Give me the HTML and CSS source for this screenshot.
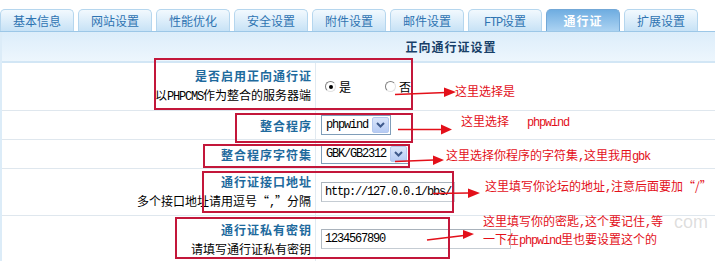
FILE: index.html
```html
<!DOCTYPE html>
<html lang="zh-CN">
<head>
<meta charset="utf-8">
<title>正向通行证设置</title>
<link rel="stylesheet" href="styles.css">
</head>
<body>
<div class="page">
  <ul class="tabs">
    <li class="tab">基本信息</li>
    <li class="tab">网站设置</li>
    <li class="tab">性能优化</li>
    <li class="tab">安全设置</li>
    <li class="tab">附件设置</li>
    <li class="tab">邮件设置</li>
    <li class="tab"><span class="mono">FTP</span>设置</li>
    <li class="tab active">通行证</li>
    <li class="tab">扩展设置</li>
  </ul>
  <div class="form">
    <div class="form-head">正向通行证设置</div>
    <div class="row row-tall">
      <div class="label"><b>是否启用正向通行证</b><span>以<span class="mono">PHPCMS</span>作为整合的服务器端</span></div>
      <div class="value">
        <span class="opt"><span class="radio checked"></span>是</span>
        <span class="opt opt-2"><span class="radio"></span>否</span>
      </div>
    </div>
    <div class="row row-short">
      <div class="label"><b>整合程序</b></div>
      <div class="value">
        <span class="select select-1"><span class="mono">phpwind</span><span class="drop"><svg width="9" height="6" viewBox="0 0 9 6"><path d="M1 1 L4.5 4.5 L8 1" fill="none" stroke="#3f5a8c" stroke-width="2"/></svg></span></span>
      </div>
    </div>
    <div class="row row-short">
      <div class="label"><b>整合程序字符集</b></div>
      <div class="value">
        <span class="select select-2"><span class="mono">GBK/GB2312</span><span class="drop"><svg width="9" height="6" viewBox="0 0 9 6"><path d="M1 1 L4.5 4.5 L8 1" fill="none" stroke="#3f5a8c" stroke-width="2"/></svg></span></span>
      </div>
    </div>
    <div class="row row-mid">
      <div class="label"><b>通行证接口地址</b><span>多个接口地址请用逗号“<span class="mono">,</span>”分隔</span></div>
      <div class="value"><span class="text text-url mono">http://127.0.0.1/bbs/</span></div>
    </div>
    <div class="row row-mid last">
      <div class="label"><b>通行证私有密钥</b><span>请填写通行证私有密钥</span></div>
      <div class="value"><span class="text text-key mono">1234567890</span></div>
    </div>
  </div>

  <div class="notes">
    <div class="box box-1"></div>
    <div class="box box-2"></div>
    <div class="box box-3"></div>
    <div class="box box-4"></div>
    <div class="box box-5"></div>
    <svg class="arrows" width="715" height="261" viewBox="0 0 715 261">
      <g stroke="#e3101a" stroke-width="1.6" fill="none">
        <path d="M395 94.5 L446 92.5"/>
        <path d="M398 129.5 L442 129.5"/>
        <path d="M395 161.5 L434 160"/>
        <path d="M433 193.5 L469 193"/>
        <path d="M427 240 L464 235.5"/>
      </g>
      <g fill="#e3101a">
        <polygon points="444,87.5 456,92 444,97"/>
        <polygon points="441,124.5 452,129.5 441,134.5"/>
        <polygon points="433,155.5 444,160 433,165"/>
        <polygon points="468,188.5 480,193 468,198"/>
        <polygon points="463,230 474,234 463,239"/>
      </g>
    </svg>
    <span class="note note-1">这里选择是</span>
    <span class="note note-2">这里选择<span class="mono gap">phpwind</span></span>
    <span class="note note-3">这里选择你程序的字符集<span class="mono">,</span>这里我用<span class="mono">gbk</span></span>
    <span class="note note-4">这里填写你论坛的地址<span class="mono">,</span>注意后面要加“/”</span>
    <span class="watermark">com</span>
    <span class="note note-5">这里填写你的密匙<span class="mono">,</span>这个要记住<span class="mono">,</span>等<br>一下在<span class="mono">phpwind</span>里也要设置这个的</span>
  </div>
</div>
</body>
</html>
```

FILE: styles.css
```css
html, body {
  margin: 0;
  padding: 0;
  overflow: hidden;
  background: #ffffff;
}

body {
  font-family: "Noto Sans CJK SC", "Noto Sans", sans-serif;
  font-size: 12px;
  color: #000000;
}

.page {
  position: relative;
  width: 900px;
  height: 261px;
}

.mono {
  font-family: "Liberation Mono", "DejaVu Sans Mono", monospace;
  font-size: 12px;
  letter-spacing: -1.2px;
}

/* tabs */
.tabs {
  display: flex;
  gap: 4px;
  margin: 0;
  padding: 9px 0 0;
  list-style: none;
  border-bottom: 1px solid #9cc7e7;
}

.tab {
  width: 74px;
  height: 22px;
  box-sizing: border-box;
  border: 1px solid #b5d6ee;
  border-bottom: none;
  border-radius: 5px 5px 0 0;
  background: linear-gradient(#f2f9fe, #c7e2f6);
  color: #2f74b2;
  text-align: center;
  line-height: 21px;
}

.tab.active {
  background: linear-gradient(#6fade1, #acd3f2);
  border-color: #73a8d7;
  color: #ffffff;
  font-weight: bold;
  letter-spacing: 1px;
}

/* form */
.form {
  border-left: 2px solid #dcecf8;
}

.form-head {
  height: 29px;
  line-height: 29px;
  text-align: center;
  font-weight: bold;
  letter-spacing: 1px;
  color: #173f68;
  background: linear-gradient(#dcedfa, #edf6fd);
  border-bottom: 2px solid #d2e6f5;
}

.row {
  display: grid;
  grid-template-columns: 314px 1fr;
  border-bottom: 1px solid #dfe7ee;
}

.row.last {
  border-bottom: none;
}

.row-tall { height: 47px; }
.row-short { height: 28px; }
.row-mid { height: 46px; }

.label {
  display: flex;
  flex-direction: column;
  justify-content: center;
  align-items: flex-end;
  padding-right: 4px;
  border-right: 1px solid #e2eaf1;
  line-height: 19px;
  text-align: right;
  white-space: nowrap;
}

.label b {
  color: #1e6a9d;
  letter-spacing: 1px;
  margin-right: -1px;
}

.value {
  display: flex;
  align-items: center;
  padding-left: 5px;
}

/* radios */
.opt {
  display: inline-flex;
  align-items: center;
}

.opt-2 {
  margin-left: 30px;
}

.radio {
  position: relative;
  display: inline-block;
  width: 11px;
  height: 11px;
  box-sizing: border-box;
  margin: 0 3px 0 4px;
  border-radius: 50%;
  border: 1px solid;
  border-color: #808080 #e2e2e2 #e2e2e2 #808080;
  background: #ffffff;
}

.radio.checked::after {
  content: "";
  position: absolute;
  left: 2.5px;
  top: 2.5px;
  width: 4px;
  height: 4px;
  border-radius: 50%;
  background: #000000;
}

/* selects */
.select {
  display: inline-flex;
  align-items: center;
  justify-content: space-between;
  height: 20px;
  box-sizing: border-box;
  border: 1px solid #7f9db9;
  padding: 0 1px 0 4px;
  background: #ffffff;
}

.select-1 { width: 70px; }
.select-2 { width: 88px; }

.drop {
  display: inline-flex;
  align-items: center;
  justify-content: center;
  width: 17px;
  height: 16px;
  box-sizing: border-box;
  border: 1px solid #b4c8ee;
  border-radius: 2px;
  background: linear-gradient(#dbe6fb, #b6cbf4);
}

/* text inputs */
.text {
  display: inline-flex;
  align-items: center;
  height: 20px;
  box-sizing: border-box;
  padding: 0 2px 0 3px;
  border: 1px solid #c5ccd3;
  border-top-color: #a9b2bb;
  border-left-color: #b3bbc3;
  background: #ffffff;
  white-space: nowrap;
  overflow: hidden;
}

.text-url { width: 134px; }
.text-key { width: 190px; }

/* annotation overlay */
.notes {
  position: absolute;
  left: 0;
  top: 0;
  width: 715px;
  height: 261px;
  pointer-events: none;
}

.box {
  position: absolute;
  box-sizing: border-box;
  border: 2px solid #c3173a;
}

.box-1 { left: 154px; top: 58px; width: 259px; height: 52px; }
.box-2 { left: 235px; top: 113px; width: 178px; height: 30px; }
.box-3 { left: 203px; top: 144px; width: 207px; height: 24px; }
.box-4 { left: 202px; top: 171px; width: 252px; height: 42px; }
.box-5 { left: 175px; top: 217px; width: 275px; height: 42px; }

.arrows {
  position: absolute;
  left: 0;
  top: 0;
}

.note {
  position: absolute;
  color: #e3101a;
  line-height: 14px;
  white-space: nowrap;
}

.note .gap {
  margin-left: 18px;
}

.note-1 { left: 455px; top: 84px; }
.note-2 { left: 461px; top: 114px; }
.note-3 { left: 446px; top: 148px; }
.note-4 { left: 485px; top: 179px; }
.note-5 { left: 483px; top: 213px; line-height: 16px; }

.watermark {
  position: absolute;
  left: 674px;
  top: 212px;
  font-family: "Liberation Sans", sans-serif;
  font-size: 18px;
  color: rgba(160, 160, 160, 0.35);
}
```
